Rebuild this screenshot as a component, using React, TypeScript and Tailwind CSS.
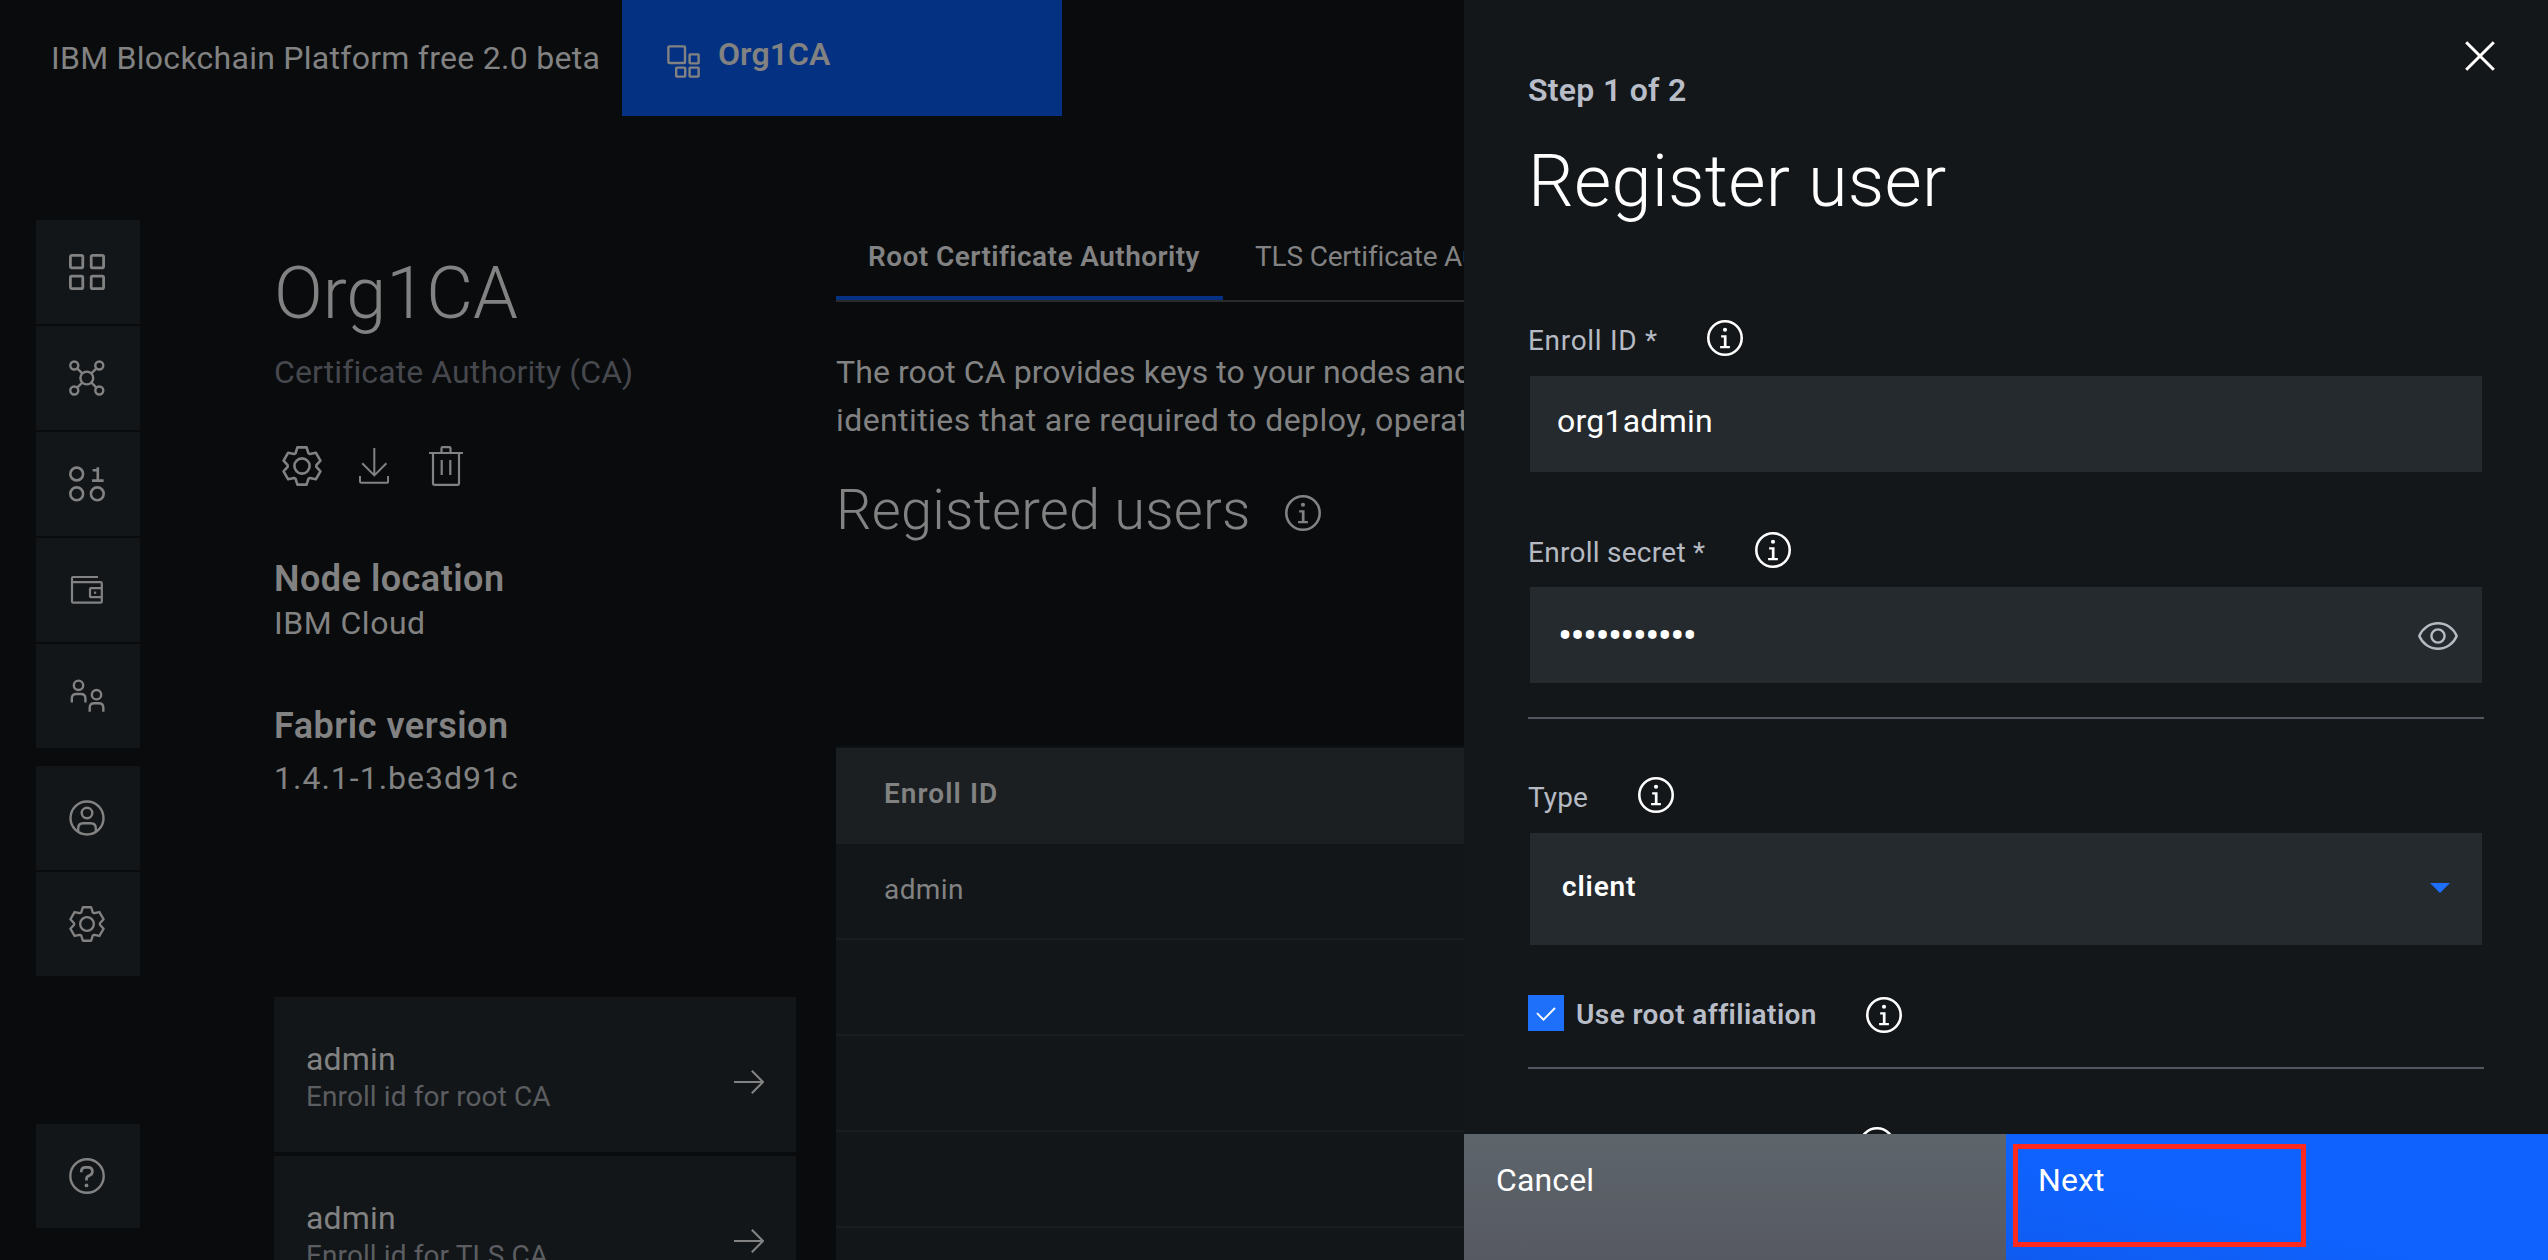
import type { ReactNode } from "react";

type IconProps = { className?: string };

/* ---------- icons ---------- */

const gearPoints = [0, 60, 120, 180, 240, 300]
  .flatMap((deg) => {
    const a = (deg * Math.PI) / 180;
    return [
      [-6.4, -12.9],
      [-4.6, -18.6],
      [4.6, -18.6],
      [6.4, -12.9],
    ].map(([x, y]) => {
      const px = x * Math.cos(a) - y * Math.sin(a) + 20;
      const py = x * Math.sin(a) + y * Math.cos(a) + 20;
      return `${px.toFixed(2)},${py.toFixed(2)}`;
    });
  })
  .join(" ");

function GearIcon({ className }: IconProps) {
  return (
    <svg viewBox="0 0 40 40" fill="none" stroke="currentColor" strokeWidth="2.6" strokeLinejoin="round" className={className}>
      <polygon points={gearPoints} />
      <circle cx="20" cy="20" r="7.6" />
    </svg>
  );
}

function InfoIcon({ className }: IconProps) {
  return (
    <svg viewBox="2 2 28 28" className={className}>
      <circle cx="16" cy="16" r="13" fill="none" stroke="currentColor" strokeWidth="2" />
      <path d="M17.2 22.2V13.8h-4.2v1.8h2.1v6.6H12.2V24h7.6v-1.8z" fill="currentColor" />
      <circle cx="16" cy="9.6" r="1.6" fill="currentColor" />
    </svg>
  );
}

function DownloadIcon({ className }: IconProps) {
  return (
    <svg viewBox="0 0 30 36" fill="none" stroke="currentColor" strokeWidth="2" className={className}>
      <path d="M15.3 0v27M3.2 15.3l12.1 12.1 12.1-12.1" />
      <path d="M1 28v5.6q0 1.2 1.2 1.2h25.7q1.2 0 1.2-1.2V28" />
    </svg>
  );
}

function TrashIcon({ className }: IconProps) {
  return (
    <svg viewBox="0 0 34 40" fill="none" stroke="currentColor" strokeWidth="2.2" className={className}>
      <path d="M0 7h34M12.5 7V2.2q0-1 1-1h7q1 0 1 1V7" />
      <path d="M4 7v30.6q0 1.2 1.2 1.2h23.6q1.2 0 1.2-1.2V7M12.7 14v15M21.3 14v15" />
    </svg>
  );
}

function ArrowIcon({ className }: IconProps) {
  return (
    <svg viewBox="0 0 30 24" fill="none" stroke="currentColor" strokeWidth="2.2" className={className}>
      <path d="M0 12h29M17.8 0.8L29 12 17.8 23.2" />
    </svg>
  );
}

function NodeIcon({ className }: IconProps) {
  return (
    <svg viewBox="0 0 33 33" fill="none" stroke="currentColor" strokeWidth="2.4" className={className}>
      <rect x="1.4" y="1.4" width="16.6" height="16.6" rx="1" />
      <rect x="22.6" y="9.4" width="9" height="9" rx="0.6" />
      <rect x="9.2" y="22.6" width="9" height="9" rx="0.6" />
      <rect x="22.6" y="22.6" width="9" height="9" rx="0.6" />
    </svg>
  );
}

function DashboardIcon({ className }: IconProps) {
  return (
    <svg viewBox="0 0 36 36" fill="none" stroke="currentColor" strokeWidth="2.8" className={className}>
      <rect x="1.4" y="1.4" width="12.4" height="12.4" rx="1.4" />
      <rect x="22.2" y="1.4" width="12.4" height="12.4" rx="1.4" />
      <rect x="1.4" y="22.2" width="12.4" height="12.4" rx="1.4" />
      <rect x="22.2" y="22.2" width="12.4" height="12.4" rx="1.4" />
    </svg>
  );
}

function NetworkIcon({ className }: IconProps) {
  return (
    <svg viewBox="0 0 36 36" fill="none" stroke="currentColor" strokeWidth="2.4" className={className}>
      <circle cx="5.3" cy="5.5" r="4" />
      <circle cx="30.3" cy="5.5" r="4" />
      <circle cx="5.3" cy="30.5" r="4" />
      <circle cx="30.3" cy="30.5" r="4" />
      <circle cx="17.8" cy="18" r="6.4" />
      <path d="M8.2 8.4l5 5M27.4 8.4l-5 5M8.2 27.6l5-5M27.4 27.6l-5-5" />
    </svg>
  );
}

function ChannelsIcon({ className }: IconProps) {
  return (
    <svg viewBox="0 0 36 36" fill="none" stroke="currentColor" strokeWidth="2.6" className={className}>
      <circle cx="7.7" cy="8" r="6.4" />
      <circle cx="7.7" cy="27.8" r="6.4" />
      <circle cx="28.3" cy="27.8" r="6.4" />
      <path d="M23.6 4.2h5.2v10.4M23 14.6h11.6M28.8 14.6V1.2" />
    </svg>
  );
}

function WalletIcon({ className }: IconProps) {
  return (
    <svg viewBox="0 0 36 36" fill="none" stroke="currentColor" strokeWidth="2.2" className={className}>
      <path d="M29 5H4q-1 0-1 1v23.4q0 1.3 1.3 1.3h27.2q1.3 0 1.3-1.3V11.3q0-1.1-1.1-1.1H3" />
      <path d="M33 16.2H22q-1 0-1 1v7q0 1 1 1h11" />
      <path d="M25 20.7h2.2" />
    </svg>
  );
}

function PeopleIcon({ className }: IconProps) {
  return (
    <svg viewBox="0 0 36 36" fill="none" stroke="currentColor" strokeWidth="2.4" className={className}>
      <circle cx="9.5" cy="7.3" r="4.7" />
      <path d="M2.8 24.5v-4q0-4.5 4.5-4.5h4.6q4.5 0 4.5 4.5v4" />
      <circle cx="27.5" cy="16.7" r="4.7" />
      <path d="M20.7 33.7v-4q0-4.5 4.5-4.5h4.6q4.5 0 4.5 4.5v4" />
    </svg>
  );
}

function AccountIcon({ className }: IconProps) {
  return (
    <svg viewBox="0 0 36 36" fill="none" stroke="currentColor" strokeWidth="2.4" className={className}>
      <circle cx="18" cy="18" r="16.5" />
      <circle cx="18" cy="13" r="5.3" />
      <path d="M9.2 31.5v-3.3q0-5 5-5h7.6q5 0 5 5v3.3" />
    </svg>
  );
}

function HelpIcon({ className }: IconProps) {
  return (
    <svg viewBox="0 0 36 36" fill="none" stroke="currentColor" strokeWidth="2.4" className={className}>
      <circle cx="18" cy="18" r="16.7" />
      <path d="M12.3 14.3v-.8q0-4.2 4.2-4.2h2.7q4.2 0 4.2 4.2 0 3.1-3.1 4.1-2.8.9-2.8 3v1.8" strokeWidth="2.7" />
      <circle cx="17.5" cy="27.4" r="1.9" fill="currentColor" stroke="none" />
    </svg>
  );
}

function CloseIcon({ className }: IconProps) {
  return (
    <svg viewBox="0 0 30 30" fill="none" stroke="currentColor" strokeWidth="3" className={className}>
      <path d="M1.2 1.2l27.6 27.6M28.8 1.2L1.2 28.8" />
    </svg>
  );
}

function EyeIcon({ className }: IconProps) {
  return (
    <svg viewBox="0 0 40 28" fill="none" stroke="currentColor" strokeWidth="2.4" className={className}>
      <path d="M1.3 14C4.5 6.2 11.7 1.3 20 1.3S35.5 6.2 38.7 14C35.5 21.8 28.3 26.7 20 26.7S4.5 21.8 1.3 14z" />
      <circle cx="20" cy="14" r="6.6" />
    </svg>
  );
}

/* ---------- dimmed page ---------- */

function Tile({ children }: { children: ReactNode }) {
  return (
    <div className="flex h-[104px] w-[104px] items-center justify-center bg-[#121619] pr-[3px] text-[#828282]">
      {children}
    </div>
  );
}

function Sidebar() {
  return (
    <nav className="flex w-[140px] shrink-0 flex-col pl-9 pt-[104px]">
      <div className="flex flex-col gap-0.5">
        <Tile><DashboardIcon className="size-9" /></Tile>
        <Tile><NetworkIcon className="size-9" /></Tile>
        <Tile><ChannelsIcon className="size-9" /></Tile>
        <Tile><WalletIcon className="size-9" /></Tile>
        <Tile><PeopleIcon className="size-9" /></Tile>
      </div>
      <div className="mt-[18px] flex flex-col gap-0.5">
        <Tile><AccountIcon className="size-9" /></Tile>
        <Tile><GearIcon className="size-9" /></Tile>
      </div>
      <div className="mt-[148px]">
        <Tile><HelpIcon className="size-9" /></Tile>
      </div>
    </nav>
  );
}

function IdentityCard({ label }: { label: string }) {
  return (
    <div className="flex h-[155px] shrink-0 justify-between bg-[#121619] pl-8 pr-8">
      <div className="pt-[42px]">
        <div className="text-[32px] leading-10 tracking-[0.18px]">admin</div>
        <div className="pt-px text-[28px] leading-[34px] tracking-[0.1px] text-[#5b5d60]">{label}</div>
      </div>
      <ArrowIcon className="mt-[73px] h-6 w-[30px]" />
    </div>
  );
}

function NodeDetails() {
  return (
    <section className="ml-[134px] flex w-[522px] shrink-0 flex-col pt-[136px]">
      <h1 className="text-[72px] font-light leading-[84px]">Org1CA</h1>
      <div className="mt-4 text-[32px] leading-10 tracking-[0.1px] text-[#46484d]">Certificate Authority (CA)</div>
      <div className="mt-[54px] flex h-10 items-start pl-2">
        <GearIcon className="size-10" />
        <DownloadIcon className="ml-[37px] mt-0.5 h-9 w-[30px]" />
        <TrashIcon className="ml-10 h-10 w-[34px]" />
      </div>
      <h2 className="mt-[71px] text-[36px] font-semibold leading-[44px] tracking-[0.49px]">Node location</h2>
      <div className="mt-0.5 text-[32px] leading-10 tracking-[0.5px]">IBM Cloud</div>
      <h2 className="mt-[61px] text-[36px] font-semibold leading-[44px] tracking-[0.52px]">Fabric version</h2>
      <div className="mt-2.5 text-[32px] leading-10 tracking-[1px]">1.4.1-1.be3d91c</div>
      <div className="mt-[199px] flex flex-col gap-1">
        <IdentityCard label="Enroll id for root CA" />
        <IdentityCard label="Enroll id for TLS CA" />
      </div>
    </section>
  );
}

function Authority() {
  return (
    <section className="ml-10 flex flex-1 flex-col pt-[122px] [&>*]:shrink-0">
      <div className="flex h-[64px] border-b-2 border-[#292b2d] text-[28px] leading-9">
        <div className="h-[62px] w-[387px] border-b-4 border-[#043181] pl-8 pt-px font-semibold tracking-[0.43px]">Root Certificate Authority</div>
        <div className="pl-8 pt-px tracking-[-0.18px]">TLS Certificate Authority</div>
      </div>
      <p className="mt-[46px] whitespace-nowrap text-[32px] leading-[48px]">
        <span className="tracking-[0.08px]">The root CA provides keys to your nodes and</span>
        <br />
        <span className="tracking-[0.41px]">identities that are required to deploy, operate</span>
      </p>
      <div className="mt-[34px] flex h-16 items-start">
        <h2 className="w-[449px] text-[56px] font-light leading-[64px] tracking-[0.23px]">Registered users</h2>
        <InfoIcon className="mt-[17px] size-9" />
      </div>
      <div className="mt-[204px] flex flex-col border-t-2 border-[#0c1318] bg-[#121619] text-[28px] leading-9 [&>*]:h-24 [&>*]:shrink-0">
        <div className="bg-[#1b1f22] pl-12 pt-7 font-semibold tracking-[1.06px]">Enroll ID</div>
        <div className="border-b-2 border-[#1a1e21] pl-12 pt-7 tracking-[0.4px]">admin</div>
        <div className="border-b-2 border-[#1a1e21]" />
        <div className="border-b-2 border-[#1a1e21]" />
        <div className="border-b-2 border-[#1a1e21]" />
        <div />
      </div>
    </section>
  );
}

/* ---------- side panel ---------- */

function RegisterPanel() {
  return (
    <aside className="absolute right-0 top-0 flex h-full w-[1084px] flex-col bg-[#13171a] text-white">
      <div className="flex h-[1134px] shrink-0 flex-col overflow-hidden pl-16 pr-16 [&>*]:shrink-0">
        <div className="-mr-[11px] flex justify-between">
          <div className="pt-[70px] text-[32px] font-semibold leading-10 tracking-[0.29px] text-[#b9bdc8]">Step 1 of 2</div>
          <CloseIcon className="mt-[41px] size-[30px]" />
        </div>
        <h1 className="mt-[30px] text-[72px] font-light leading-[84px] tracking-[0.24px]">Register user</h1>

        <div className="mt-24 flex h-9">
          <label className="w-[179px] pt-[3px] text-[28px] leading-9 tracking-[0.69px] text-[#b6bac2]">Enroll ID *</label>
          <InfoIcon className="size-9" />
        </div>
        <div className="mx-0.5 mt-5 h-24 bg-[#252a2e] pl-[27px] pt-[25px] text-[32px] leading-10 tracking-[0.24px]">org1admin</div>

        <div className="mt-[60px] flex h-9">
          <label className="w-[227px] pt-[3px] text-[28px] leading-9 tracking-[0.27px] text-[#b6bac2]">Enroll secret *</label>
          <InfoIcon className="size-9" />
        </div>
        <div className="mx-0.5 mt-[19px] flex h-24 justify-between bg-[#252a2e] pl-7 pr-6">
          <div className="pt-[29px] text-[42px] leading-10 tracking-[-1.7px]">•••••••••••</div>
          <EyeIcon className="mt-[35px] h-7 w-10 text-[#b6bac2]" />
        </div>
        <hr className="mt-[34px] h-0.5 border-0 bg-[#54575f]" />

        <div className="mt-[58px] flex h-9">
          <label className="w-[110px] pt-[3px] text-[28px] leading-9 tracking-[0.1px] text-[#b6bac2]">Type</label>
          <InfoIcon className="size-9" />
        </div>
        <div className="mx-0.5 mt-5 flex h-28 justify-between bg-[#252a2e] pl-8 pr-8">
          <div className="pt-9 text-[28px] font-semibold leading-9 tracking-[0.83px]">client</div>
          <svg viewBox="0 0 20 10" className="mt-[50px] h-2.5 w-5" fill="#1e70fa">
            <path d="M0 0h20L10 10z" />
          </svg>
        </div>

        <div className="mt-[50px] flex h-9">
          <div className="flex size-9 items-center justify-center bg-[#1e70fa]">
            <svg viewBox="0 0 20 14" className="mt-0.5 h-3.5 w-5" fill="none" stroke="white" strokeWidth="1.9">
              <path d="M1 6.2l6.5 6.5L19 1" />
            </svg>
          </div>
          <label className="ml-3 w-[290px] pt-0.5 text-[28px] font-semibold leading-9 tracking-[0.42px] text-[#b9bdc8]">Use root affiliation</label>
          <InfoIcon className="mt-0.5 size-9" />
        </div>
        <hr className="mt-9 h-0.5 border-0 bg-[#54575f]" />
        <div className="mt-[58px] pl-[331px]">
          <InfoIcon className="size-9" />
        </div>
      </div>

      <div className="flex h-[126px] shrink-0 text-[32px] leading-10">
        <button className="flex w-[542px] items-start bg-linear-to-b from-[#5d656b] to-[#575962] pl-8 pt-[26px] tracking-[0.15px]">Cancel</button>
        <button className="relative flex w-[542px] items-start bg-linear-to-tr from-[#0f5bf0] from-0% to-[#0f62fe] to-40% pl-8 pt-[26px] tracking-[0.11px]">
          Next
          <span className="absolute left-[7px] top-2.5 h-[103px] w-[293px] border-[5px] border-[#ff2a1f]" />
        </button>
      </div>
    </aside>
  );
}

export default function App() {
  return (
    <div className="relative flex h-[1260px] w-[2548px] flex-col overflow-hidden bg-[#090b0d] font-['Roboto',sans-serif] text-[#828282]">
      <header className="flex h-[116px] shrink-0">
        <div className="w-[622px] pl-[51px] pt-[38px] text-[32px] leading-10 tracking-[0.27px]">IBM Blockchain Platform free 2.0 beta</div>
        <div className="flex w-[440px] bg-[#043181] pl-[45px]">
          <NodeIcon className="mt-[45px] size-[33px]" />
          <div className="ml-[18px] pt-[34px] text-[32px] font-semibold leading-10 tracking-[0.06px]">Org1CA</div>
        </div>
      </header>
      <main className="flex h-[1144px] overflow-hidden">
        <Sidebar />
        <NodeDetails />
        <Authority />
      </main>
      <RegisterPanel />
    </div>
  );
}
